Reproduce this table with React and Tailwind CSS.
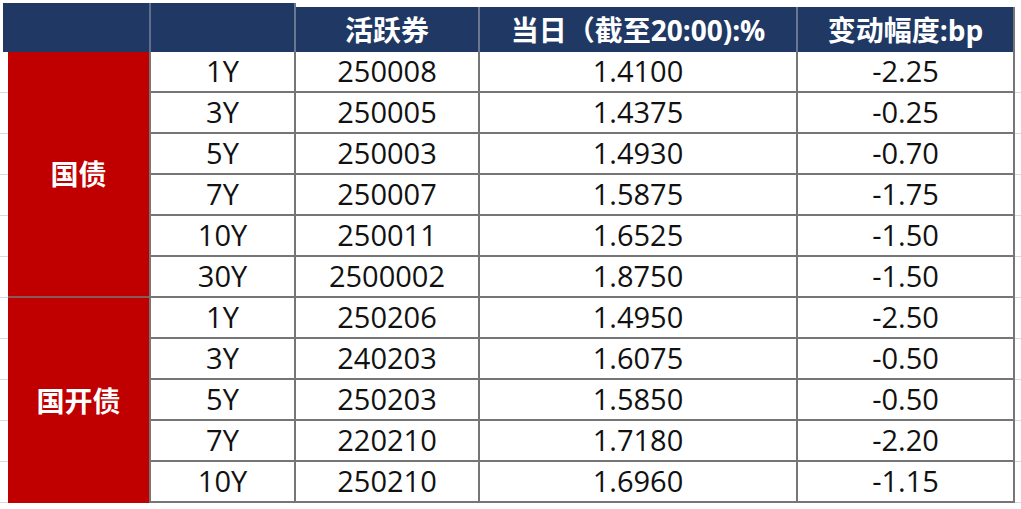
import React from "react";

const govt = [
  ["1Y", "250008", "1.4100", "-2.25"],
  ["3Y", "250005", "1.4375", "-0.25"],
  ["5Y", "250003", "1.4930", "-0.70"],
  ["7Y", "250007", "1.5875", "-1.75"],
  ["10Y", "250011", "1.6525", "-1.50"],
  ["30Y", "2500002", "1.8750", "-1.50"],
];
const cdb = [
  ["1Y", "250206", "1.4950", "-2.50"],
  ["3Y", "240203", "1.6075", "-0.50"],
  ["5Y", "250203", "1.5850", "-0.50"],
  ["7Y", "220210", "1.7180", "-2.20"],
  ["10Y", "250210", "1.6960", "-1.15"],
];
const rows = [...govt, ...cdb];

const font = { fontFamily: '"Open Sans","Noto Sans CJK SC",sans-serif' };

export default function App() {
  return (
    <div className="w-[1021px] h-[509px] bg-white overflow-hidden pt-[3px]" style={font}>
      {/* header */}
      <div className="flex items-end h-[49px] ml-[3px] text-white font-bold text-[28px]">
        <div className="w-[148px] h-[49px] bg-[#203864] border-r-2 border-[#5f6d8e]" />
        <div className="w-[145px] h-[49px] bg-[#203864] border-r-2 border-[#6b7690]" />
        <div className="w-[184px] h-[45px] bg-[#203864] border-r-2 border-[#6b7690] flex items-center justify-center leading-none">
          活跃券
        </div>
        <div className="w-[318px] h-[45px] bg-[#203864] border-r-2 border-[#6b7690] flex items-center justify-center leading-none whitespace-nowrap">
          当日（截至20:00):%
        </div>
        <div className="w-[217px] h-[45px] bg-[#203864] border-r-2 border-[#767676] flex items-center justify-center leading-none whitespace-nowrap">
          变动幅度:bp
        </div>
      </div>

      {/* body */}
      <div className="flex">
        <div className="w-[8px] flex flex-col">
          {rows.map((_, i) => (
            <div key={i} className="h-[41px] border-b border-[#d9d9d9]" />
          ))}
        </div>
        <div className="w-[141px] flex flex-col text-white font-bold text-[28px]">
          <div className="h-[244px] bg-[#c00000] flex items-center justify-center leading-none">国债</div>
          <div className="h-[2px] bg-[#8a5a5a]" />
          <div className="h-[205px] bg-[#c00000] flex items-center justify-center leading-none">国开债</div>
        </div>
        <div className="w-[2px] h-[451px] bg-[#767676]" />
        <div className="flex flex-col text-[29px] text-[#111] leading-none">
          {rows.map((r, i) => (
            <div key={i} className="flex h-[41px] border-b-2 border-[#767676]">
              <div className="w-[145px] border-r-2 border-[#767676] flex items-center justify-center pb-[3px]">{r[0]}</div>
              <div className="w-[184px] border-r-2 border-[#767676] flex items-center justify-center pb-[3px]">{r[1]}</div>
              <div className="w-[318px] border-r-2 border-[#767676] flex items-center justify-center pb-[3px]">{r[2]}</div>
              <div className="w-[217px] border-r-2 border-[#767676] flex items-center justify-center pb-[3px]">{r[3]}</div>
            </div>
          ))}
        </div>
        <div className="w-[6px] flex flex-col">
          {rows.map((_, i) => (
            <div key={i} className="h-[41px] border-b border-[#d9d9d9]" />
          ))}
        </div>
      </div>
    </div>
  );
}
